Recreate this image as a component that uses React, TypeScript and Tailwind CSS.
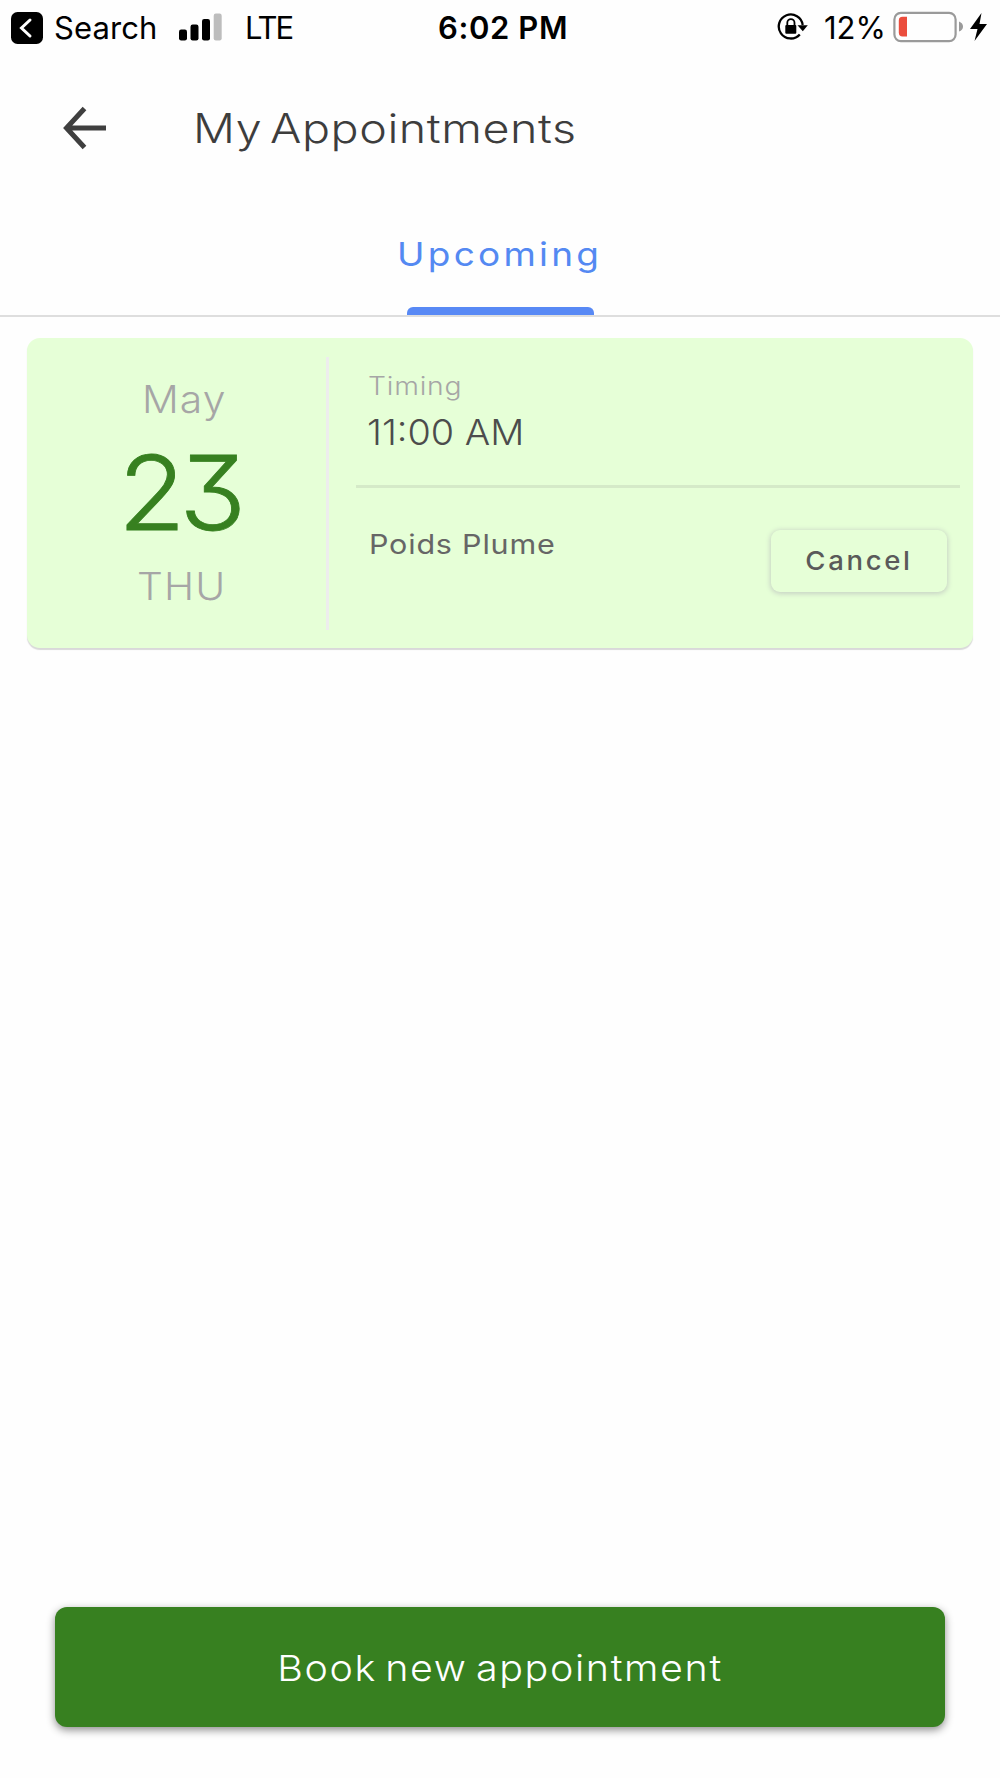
import React from 'react';

interface Appointment {
  month: string;
  day: string;
  weekday: string;
  time: string;
  name: string;
}

const appointment: Appointment = {
  month: 'May',
  day: '23',
  weekday: 'THU',
  time: '11:00 AM',
  name: 'Poids Plume',
};

function SignalBars() {
  return (
    <svg width="44" height="28" viewBox="0 0 44 28">
      <rect x="0" y="16.5" width="8" height="11" rx="2.2" fill="#000" />
      <rect x="11.5" y="11.5" width="8" height="16" rx="2.2" fill="#000" />
      <rect x="23" y="6" width="8" height="21.5" rx="2.2" fill="#000" />
      <rect x="34.7" y="0.5" width="8" height="27" rx="2.2" fill="#bdbdbd" />
    </svg>
  );
}

function RotationLock() {
  return (
    <svg width="32" height="28" viewBox="0 0 32 28" fill="none">
      <path d="M25.7 12A12 12 0 1 0 22.8 21.4" stroke="#000" strokeWidth="2.3" />
      <path d="M20.5 12.2h10.3l-5 6z" fill="#000" />
      <rect x="8.3" y="12" width="11" height="8.7" rx="1" fill="#000" />
      <path d="M10.3 13V9.8a3.6 3.6 0 0 1 7.2 0V13" stroke="#000" strokeWidth="1.8" />
    </svg>
  );
}

function Battery() {
  return (
    <svg width="71" height="32" viewBox="0 0 71 32" fill="none">
      <rect x="1.4" y="1.9" width="61.2" height="28.2" rx="6.5" stroke="#9a9a9a" strokeWidth="2.2" />
      <path d="M5.8 9.5Q5.8 5.8 9.5 5.8H14V25.500H9.5Q5.8 25.500 5.8 21.5Z" fill="#eb4d3d" />
      <path d="M66 10.5Q70 12 70 15.500T66 20.500Z" fill="#9a9a9a" />
    </svg>
  );
}

function StatusBar() {
  return (
    <div className="h-14 w-full pb-0.5 flex items-center text-black text-[31px] leading-none whitespace-nowrap">
      <div className="flex items-center w-[438px] pl-[11px]">
        <svg className="mt-0.5" width="32" height="32" viewBox="0 0 32 32" fill="none">
          <rect width="32" height="32" rx="6.5" fill="#000" />
          <path d="M19 8l-8.5 8 8.5 8" stroke="#fff" strokeWidth="3" strokeLinecap="round" />
        </svg>
        <span className="ml-[11px] w-[125px] tracking-[0.1px]">Search</span>
        <SignalBars />
        <span className="ml-[22px] tracking-[-2px]">LTE</span>
      </div>
      <span className="w-[339px] font-semibold tracking-[0.6px]">6:02 PM</span>
      <RotationLock />
      <span className="ml-[15px] w-[69px] tracking-[0px]">12%</span>
      <Battery />
      <svg className="ml-[6px]" width="18" height="28" viewBox="0 0 18 28">
        <path d="M11.5 0L0 16h7.5L4.5 28 17 11H9.5z" fill="#000" />
      </svg>
    </div>
  );
}

function Header() {
  return (
    <header className="h-36 flex items-center pl-[63px] text-[#3d3d3d]">
      <svg width="46" height="44" viewBox="0 0 46 44" fill="none">
        <path d="M21.5 2.5L3.5 22l18 19.5M4 22h39" stroke="#3f3f3f" strokeWidth="5" />
      </svg>
      <h1 className="mt-0.5 ml-[84px] origin-left scale-x-[1.15] text-[40.5px] font-light leading-none tracking-[0.5px] [word-spacing:-5px] whitespace-nowrap">
        My Appointments
      </h1>
    </header>
  );
}

function Tabs() {
  return (
    <nav className="h-[117px] border-b-2 border-[#dedede] flex flex-col items-center justify-between pt-[38px]">
      <button className="scale-x-[1.12] text-[33px] leading-none text-[#5489f2] tracking-[2.9px]">Upcoming</button>
      <div className="w-[187px] h-2 rounded-t-[6px] bg-[#5889f5]" />
    </nav>
  );
}

function AppointmentCard({ item }: { item: Appointment }) {
  return (
    <article className="mt-[21px] mx-[27px] h-[310px] flex rounded-[13px] bg-[#e6ffd7] shadow-[0_2px_1px_#d9d9d9]">
      <div className="w-[299px] pt-[42px] pl-[10px] flex flex-col items-center leading-none font-light text-[#a6a6a6]">
        <span className="origin-left scale-x-[1.075] text-[38px] tracking-[1px]">{item.month}</span>
        <span className="mt-[23px] ml-[-6px] scale-x-[1.07] text-[103px] tracking-[-6px] text-[#378020] [font-feature-settings:'cv09'] [-webkit-text-stroke:0.8px_#378020]">
          {item.day}
        </span>
        <span className="mt-[23px] scale-x-[1.07] text-[38px] tracking-[1px]">{item.weekday}</span>
      </div>
      <div className="mt-[19px] mb-[18px] w-[3px] bg-[#ededed]" />
      <div className="flex-1 pl-[27px] pr-[13px]">
        <div className="h-[150px] pl-[12px] pt-[35px] flex flex-col items-start border-b-[3px] border-[#d5eac8] leading-none">
          <span className="origin-left scale-x-[1.11] text-[25.5px] font-light tracking-[0.7px] text-[#a6a6a6]">
            Timing
          </span>
          <span className="mt-[15px] ml-[-1px] origin-left scale-x-[1.05] text-[36px] font-light text-[#4c4c4c]">
            {item.time}
          </span>
        </div>
        <div className="flex items-start justify-between px-[13px]">
          <span className="mt-[43px] origin-left scale-x-[1.13] text-[27px] leading-none tracking-[0.7px] text-[#666]">
            {item.name}
          </span>
          <button className="mt-[42px] w-[176px] h-[62px] rounded-[9px] bg-[#e6ffd7] text-[#5a5a5a] shadow-[0_1px_5px_1px_#c8d3c5]">
            <span className="block scale-x-[1.06] text-[26px] font-medium leading-none tracking-[2.5px]">Cancel</span>
          </button>
        </div>
      </div>
    </article>
  );
}

export default function App() {
  return (
    <div className="w-full h-[1778px] flex flex-col overflow-hidden bg-[#fefefe] font-['Inter',sans-serif]">
      <StatusBar />
      <Header />
      <Tabs />
      <AppointmentCard item={appointment} />
      <button className="mt-auto mb-[51px] mx-[55px] h-[120px] pt-0.5 rounded-[12px] bg-[#378020] text-white shadow-[0_3px_8px_rgba(0,0,0,0.45)]">
        <span className="block scale-x-[1.095] text-[36px] font-light leading-none tracking-[1.5px] [word-spacing:-4px]">
          Book new appointment
        </span>
      </button>
    </div>
  );
}
